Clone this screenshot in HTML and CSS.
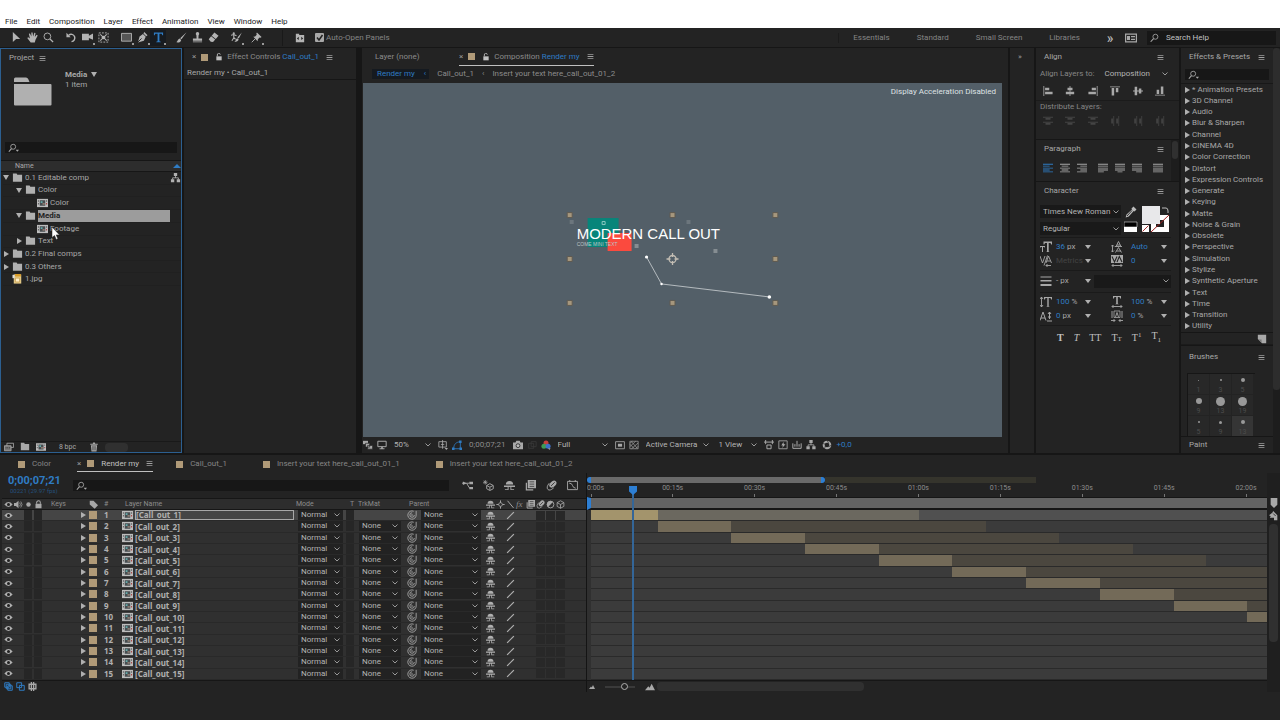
FILE: index.html
```
<!DOCTYPE html>
<html lang="en">
<head>
<meta charset="UTF-8">
<meta name="viewport" content="width=device-width, initial-scale=1.0">
<title>Render my - After Effects</title>
<link rel="stylesheet" href="styles.css">
</head>
<body>
  <svg class="sprite" aria-hidden="true">
    <symbol id="i-menu" viewBox="0 0 12 12"><path d="M1 2h10v1.4H1zM1 5.3h10v1.4H1zM1 8.6h10V10H1z"/></symbol>
    <symbol id="i-select" viewBox="0 0 12 12"><path d="M2 0l8 7.5H5.6L2 11z"/></symbol>
    <symbol id="i-hand" viewBox="0 0 12 12"><path d="M4 11.500L.3 6.600l1-.9L3.200 7 2 2l1.200-.4L4.800 5 4.700.5h1.400L6.700 5 8 .9l1.300.3L8.500 5.500 10.500 3l1.200.7L9.300 8.500 8.500 11.500z"/></symbol>
    <symbol id="i-zoom" viewBox="0 0 12 12"><circle cx="4.800" cy="4.800" r="3.700" fill="none" stroke="currentColor"/><path d="M7.500 7.500l3.500 3.500" stroke="currentColor" stroke-width="1.500"/></symbol>
    <symbol id="i-rotate" viewBox="0 0 12 12"><path d="M3 3.500a4 4 0 1 1 3 7" fill="none" stroke="currentColor" stroke-width="1.600"/><path d="M.5.8v5h4.600z"/></symbol>
    <symbol id="i-camera" viewBox="0 0 12 12"><path d="M0 2h7.500v2L12 1.500v7L7.500 6.500V9H0z"/></symbol>
    <symbol id="i-pan" viewBox="0 0 12 12"><path d="M1 1h10v10H1z" fill="none" stroke="currentColor" stroke-dasharray="2 1.300"/><path d="M2.500 2.500l7 7m0-7l-7 7" stroke="currentColor" stroke-width="1.200"/><circle cx="6" cy="6" r="2"/></symbol>
    <symbol id="i-rect" viewBox="0 0 12 12"><path d="M.5 1.500h11v8.500H.5z" fill="#555" stroke="currentColor"/></symbol>
    <symbol id="i-pen" viewBox="0 0 12 12"><path d="M8 0l3.500 3.500-1.500 1L7 1.500zM6.500 2.200l3 3L7.500 9.500 1 11.500 2.800 5z"/><path d="M1 11l4-4" stroke="#232323"/></symbol>
    <symbol id="i-type" viewBox="0 0 12 12"><path d="M1 .5h10v3h-.9l-.6-1.600H7V10l1.500.5v.7h-5v-.7L5 10V1.900H2.500L1.900 3.500H1z"/></symbol>
    <symbol id="i-brush" viewBox="0 0 12 12"><path d="M11.500.4L6 8 4.500 6.700zM4 7.200l1.600 1.400C5.500 10.800 3 11.800.4 11.300 2 10.300 1.800 7.800 4 7.200z"/></symbol>
    <symbol id="i-stamp" viewBox="0 0 12 12"><path d="M6 0a2 2 0 0 1 1.200 3.500L7 7h4v2.500H1V7h4l-.2-3.500A2 2 0 0 1 6 0zM1 10.300h10v1H1z"/></symbol>
    <symbol id="i-eraser" viewBox="0 0 12 12"><path d="M7 .5L11.500 4 8.500 7.500 4 4zM3.400 4.700l4.500 3.500L5.500 11 3 10.500.8 8z"/></symbol>
    <symbol id="i-roto" viewBox="0 0 12 12"><path d="M11.800.5L8.500 7 7 6zM6.800 6.800l1.500 1.200c-.3 2-2 3-4.800 3C5.500 10 5 7.500 6.800 6.800z"/><circle cx="3" cy="1.500" r="1.200"/><path d="M0 3.500l3-.8 3 1.300M3 3v3.500l-2 3M3 6l2 2" fill="none" stroke="currentColor" stroke-width="1.200"/></symbol>
    <symbol id="i-pin" viewBox="0 0 12 12"><path d="M6.500.5l5 5-1 .8-1.200-.3L7.500 8l-.3 2-4.700-4.700 2-.3L6.300 3 5.800 1.500z"/><path d="M4.500 7.500L.8 11.200" stroke="currentColor"/></symbol>
    <symbol id="i-panels" viewBox="0 0 12 12"><path d="M1 1h4v1.500h6V11H1z"/><path d="M4.500 4.500v4L2.200 6.500zM7.500 4.500v4l2.300-2z" fill="#232323"/></symbol>
    <symbol id="i-sync" viewBox="0 0 12 9"><path d="M.6.6h10.800v7.800H.6z" fill="none" stroke="currentColor" stroke-width="1.200"/><path d="M2 2.500h3v4H2zM6 2.500h4v1.300H6zM6 5.200h4v1.300H6z"/></symbol>
    <symbol id="i-search" viewBox="0 0 12 12"><circle cx="6.500" cy="4.500" r="3" fill="none" stroke="currentColor"/><path d="M4.300 6.700L.8 10.500" stroke="currentColor" stroke-width="1.300"/></symbol>
    <symbol id="i-searchmenu" viewBox="0 0 14 12"><circle cx="6" cy="4.500" r="3" fill="none" stroke="currentColor"/><path d="M4 6.700L.8 10.500" stroke="currentColor" stroke-width="1.300"/><path d="M9 8h4l-2 2.500z"/></symbol>
    <symbol id="i-lock" viewBox="0 0 12 12"><path d="M2 5h8v6H2z"/><path d="M3.500 5V3a2.200 2.200 0 0 1 4.400-.5" fill="none" stroke="currentColor" stroke-width="1.300"/></symbol>
    <symbol id="i-locked" viewBox="0 0 12 12"><path d="M2 5h8v6H2z"/><path d="M3.500 5V3.500a2.500 2.500 0 0 1 5 0V5" fill="none" stroke="currentColor" stroke-width="1.400"/></symbol>
    <symbol id="i-folder" viewBox="0 0 12 10"><path d="M1 0h4l.8 1.500H11V9H1z"/></symbol>
    <symbol id="i-bigfolder" viewBox="0 0 38 29"><path d="M0 4V2q0-1.500 1.500-1.500H12q1.500 0 2.200 1.500L15.500 5H0zM0 7h36.500q1 0 1 1v19.500q0 1-1 1H1q-1 0-1-1z"/></symbol>
    <symbol id="i-comp" viewBox="0 0 12 10"><path d="M0 .500h12v9H0z" fill="#bdbdbd"/><path d="M3 2h6v6H3z" fill="#474d50"/><path d="M1 2h1v1.500H1zM1 5h1v1.500H1zM10 2h1v1.500h-1z" fill="#555"/><path d="M10 5h1v1.500h-1z" fill="#a33"/><path d="M4 3h2v2H4z" fill="#6aa"/><path d="M6 5h2.500v2H6z" fill="#8a7a70"/></symbol>
    <symbol id="i-image" viewBox="0 0 12 12"><path d="M1.500.5h9v11h-9z" fill="#e3c987"/><path d="M3 0h7v3H3z" fill="#d89b28"/><path d="M0 1h2.500v4H0z" fill="#ddd"/><path d="M3.500 5h5v4.500h-5z" fill="#fff0c8" stroke="#b07a20" stroke-width=".6"/></symbol>
    <symbol id="i-flow" viewBox="0 0 12 12"><path d="M4 0h4v3.600H4zM.5 7.500h4v3.500h-4zM7.500 7.500h4v3.500h-4z"/><path d="M6 3v3M2.500 8V5.800h7V8" fill="none" stroke="currentColor"/></symbol>
    <symbol id="i-footage" viewBox="0 0 12 10"><path d="M3.500.5h8v5h-8z" fill="none" stroke="currentColor"/><path d="M.5 3.500h8v6h-8z" fill="#777" stroke="currentColor"/><path d="M2 6h5" stroke="#222" stroke-dasharray="1 1"/></symbol>
    <symbol id="i-trash" viewBox="0 0 12 12"><path d="M1.500 2h3l.5-1.500h2L7.500 2h3v1.200h-9zM2.300 4h7.400L9 11.500H3z"/><path d="M4.500 5v5M6 5v5M7.500 5v5" stroke="#232323" stroke-width=".6"/></symbol>
    <symbol id="i-layers" viewBox="0 0 12 12"><path d="M0 1h6v4H0z"/><path d="M3 4h5v4.500H3zM5.500 6.500h6v4.500h-6z" stroke="#232323" stroke-width=".8"/></symbol>
    <symbol id="i-monitor" viewBox="0 0 12 12"><path d="M1 1.500h10v6.500H1z" fill="none" stroke="currentColor" stroke-width="1.200"/><path d="M5 8h2v2h2v1H3v-1h2z"/></symbol>
    <symbol id="i-guides" viewBox="0 0 12 12"><path d="M1 2h9v6.500H1zM5.500 0v10.500M3.500 5.300h4" fill="none" stroke="currentColor"/><path d="M8 9.500h4L10 12z"/></symbol>
    <symbol id="i-mask" viewBox="0 0 12 12"><path d="M2 10.500C2 5 5 2.500 10 2v8.500z" fill="none" stroke="currentColor"/><path d="M0 9h3v3H0zM8.500.5h3v3h-3zM9 9h3v3H9z"/></symbol>
    <symbol id="i-snapshot" viewBox="0 0 12 12"><path d="M0 3h3l1-2h4l1 2h3v8H0z"/><circle cx="6" cy="6.800" r="2.300" fill="#bbb" stroke="#232323"/></symbol>
    <symbol id="i-show" viewBox="0 0 12 12"><path d="M2 4h6v6H2zM5 2h6v6H5z" fill="none" stroke="currentColor"/></symbol>
    <symbol id="i-rgb" viewBox="0 0 12 12"><circle cx="6" cy="3.500" r="3" fill="#c8403c"/><circle cx="3.500" cy="7.500" r="3" fill="#3f9a55"/><circle cx="8.500" cy="7.500" r="3" fill="#3f6fc8"/><path d="M8.500 10h3L10 12z"/></symbol>
    <symbol id="i-roi" viewBox="0 0 12 12"><path d="M.7 2h10.600v8.500H.7z" fill="none" stroke="currentColor"/><path d="M3.500 4.500h5V8h-5z"/></symbol>
    <symbol id="i-grid" viewBox="0 0 12 12"><path d="M1 1.500h10v9H1zM1 4l3-2.500M1 8l7-6.500M3 10.500l8-7M8 10.500l3-3M3 2l7 8M1 5l5 5" fill="none" stroke="currentColor" stroke-width=".8"/></symbol>
    <symbol id="i-pixel" viewBox="0 0 12 12"><path d="M0 2.500h12M2 0v5M10 0v5M3.500 6h5v4.500h-5z" fill="none" stroke="currentColor" stroke-width="1.200"/></symbol>
    <symbol id="i-fast" viewBox="0 0 12 12"><path d="M1 1h10v9.500H1z" fill="none" stroke="currentColor"/><path d="M6.500 2.500L4 6.500h2L5 9.500l4-4.500H7z"/></symbol>
    <symbol id="i-tl" viewBox="0 0 12 12"><path d="M1 4v6h10V4M6 1v7M3.500 5v3M8.500 5v3" fill="none" stroke="currentColor" stroke-width="1.200"/></symbol>
    <symbol id="i-exposure" viewBox="0 0 12 12"><circle cx="6" cy="6" r="4" fill="none" stroke="currentColor" stroke-width="2.400"/><path d="M6 0l2 4M12 6L8 8M3 11l1-4M0 4l4 1" stroke="#232323" stroke-width=".8"/></symbol>
    <symbol id="i-al" viewBox="0 0 12 12"><path d="M.5 0h1v12h-1zM2.500 2h5v3h-5zM2.500 7h9v3h-9z"/></symbol>
    <symbol id="i-ac" viewBox="0 0 12 12"><path d="M5.500 0h1v12h-1zM3 2h6v3H3zM1 7h10v3H1z"/></symbol>
    <symbol id="i-dist" viewBox="0 0 12 12"><path d="M0 1h12v1H0zM3 2.500h6v2H3zM0 7h12v1H0zM3 8.500h6v2H3z"/></symbol>
    <symbol id="i-para" viewBox="0 0 12 12"><path d="M0 1h12v1H0zM0 3.300h8v1H0zM0 5.600h12v1H0zM0 7.900h8v1H0zM0 10.200h12v1H0z"/></symbol>
    <symbol id="i-parac" viewBox="0 0 12 12"><path d="M0 1h12v1H0zM2 3.300h8v1H2zM0 5.600h12v1H0zM2 7.900h8v1H2zM0 10.200h12v1H0z"/></symbol>
    <symbol id="i-paraj" viewBox="0 0 12 12"><path d="M0 1h12v1H0zM0 3.300h12v1H0zM0 5.600h12v1H0zM0 7.900h12v1H0zM0 10.200h12v1H0z"/></symbol>
    <symbol id="i-paral" viewBox="0 0 12 12"><path d="M0 1h12v1H0zM0 3.300h12v1H0zM0 5.600h12v1H0zM0 7.900h12v1H0zM0 10.200h7v1H0z"/></symbol>
    <symbol id="i-paralc" viewBox="0 0 12 12"><path d="M0 1h12v1H0zM0 3.300h12v1H0zM0 5.600h12v1H0zM0 7.900h12v1H0zM3 10.200h6v1H3z"/></symbol>
    <symbol id="i-dropper" viewBox="0 0 12 12"><path d="M8.500.5l3 3-2 2-.8-.5-5 5.500-3 1 .8-3L7 3.500l-.5-1z"/><path d="M2 10l5-5.500" stroke="#232323" stroke-width=".9"/></symbol>
    <symbol id="i-stroke" viewBox="0 0 12 12"><path d="M.5 1.500h11v1H.5zM.5 5h11v1.500H.5zM.5 9h11v2H.5z"/></symbol>
    <symbol id="i-size" viewBox="0 0 12 12"><path d="M3.500.5H12v3h-.8L10.500 2H8.700v8.500l1 .5H6l1-.5V2H5l-.7 1.500h-.8z"/><path d="M0 5h5v1.500h-.5L4 6H3v5H2V6H1l-.5.5H0z"/></symbol>
    <symbol id="i-vscale" viewBox="0 0 12 12"><path d="M1.500 1v10M0 3l1.500-2L3 3M0 9l1.500 2L3 9" fill="none" stroke="currentColor" stroke-width=".9"/><path d="M4 1h8v2.500h-.8L10.500 2H8.700v8l1 .8H6.300l1-.8V2H5.500l-.7 1.500H4z"/></symbol>
    <symbol id="i-hscale" viewBox="0 0 12 12"><path d="M2 0h8v2.500h-.8L8.500 1H6.800v6.500l1 .7H4.200l1-.7V1H3.500l-.7 1.500H2z"/><path d="M1 10.500h10M2.500 9L1 10.500 2.500 12M9.500 9l1.500 1.500L9.500 12" fill="none" stroke="currentColor" stroke-width=".9"/></symbol>
    <symbol id="i-lead" viewBox="0 0 12 12"><path d="M1.500 4v7M0 9.500L1.500 11 3 9.500M0 5.500L1.500 4 3 5.500M5 5.500L7.500.5l2.500 5M6 4h3M4.500 11.500L7.500 6.500l3 5M5.500 10h4.500M4 5.500h7" fill="none" stroke="currentColor" stroke-width=".9"/></symbol>
    <symbol id="i-kern" viewBox="0 0 12 12"><path d="M0 1l2.500 7L5 1M4 10.500L7.500.5M6 8l2.500-7L11.500 8M7 6h3.500M6 10.500h5M7.500 9L6 10.500 7.500 12" fill="none" stroke="currentColor" stroke-width=".9"/></symbol>
    <symbol id="i-track" viewBox="0 0 12 12"><path d="M0 0h12v8H0z"/><path d="M1 1.500L3.500 7 6 1.500M6 7l2.300-5.500L11 7" fill="none" stroke="#232323" stroke-width="1.100"/><path d="M1 10.500h10M2.500 9L1 10.500 2.500 12M9.500 9l1.500 1.500L9.500 12" fill="none" stroke="currentColor" stroke-width=".9"/></symbol>
    <symbol id="i-base" viewBox="0 0 12 12"><path d="M0 10.500L3 2l3 8.500M1 8h4M7 11h5M9.500 2v7M8 4l1.500-2L11 4M8 7h3" fill="none" stroke="currentColor"/></symbol>
    <symbol id="i-tsume" viewBox="0 0 12 12"><path d="M3 1h6v6.500H3z" fill="none" stroke="currentColor" stroke-width=".8"/><path d="M1 1v7M11 1v7M4.500 7L6 2.500 7.500 7M0 10.500h4M12 10.500H8M2.500 9L4 10.500 2.500 12M9.500 9L8 10.500 9.500 12" fill="none" stroke="currentColor" stroke-width=".9"/></symbol>
    <symbol id="i-new" viewBox="0 0 12 12"><path d="M1 1h10v10H6L1 6z"/><path d="M1.500 6.500h4v4z" fill="#777"/></symbol>
    <symbol id="i-eye" viewBox="0 0 12 12"><path d="M.5 6q5.500-6.500 11 0-5.500 6.500-11 0z"/><circle cx="6" cy="6" r="2" fill="#222"/></symbol>
    <symbol id="i-speaker" viewBox="0 0 12 12"><path d="M0 4h2.500L6 1v10L2.500 8H0z"/><path d="M7.500 3.500q2 2.500 0 5M9 2q3.500 4 0 8" fill="none" stroke="currentColor"/></symbol>
    <symbol id="i-dot" viewBox="0 0 12 12"><circle cx="6" cy="6" r="3"/></symbol>
    <symbol id="i-tag" viewBox="0 0 12 12"><path d="M1 1h5l6 6-4.500 4.500L1 6z"/></symbol>
    <symbol id="i-shy" viewBox="0 0 12 12"><path d="M2 5q0-4 4-4t4 4zM0 6h12v1.500H8V10h3v1H7V7.500H5V11H1v-1h3V7.500H0z"/></symbol>
    <symbol id="i-sun" viewBox="0 0 12 12"><path d="M6 .5v11M.5 6h11" stroke="currentColor" stroke-width="1.300"/><circle cx="6" cy="6" r="2.500" fill="#2d2d2d" stroke="currentColor"/></symbol>
    <symbol id="i-back" viewBox="0 0 12 12"><path d="M2 1l8 9.500" stroke="currentColor" stroke-width="1.300"/></symbol>
    <symbol id="i-slash" viewBox="0 0 12 12"><path d="M1.500 10.500l9-9" stroke="currentColor" stroke-width="1.600"/></symbol>
    <symbol id="i-blend" viewBox="0 0 12 12"><path d="M3 0h9v9H3z"/><path d="M5 2h5M5 4.500h5M5 7h5" stroke="#333" stroke-width=".8"/><path d="M1.500 3v7.800H9" fill="none" stroke="currentColor" stroke-width="1.300"/></symbol>
    <symbol id="i-blur" viewBox="0 0 12 12"><ellipse cx="7.500" cy="4.500" rx="4.500" ry="3" transform="rotate(-45 7.500 4.500)"/><path d="M3.500 3.500Q0 8 2 10.200T8.500 8.500" fill="none" stroke="currentColor"/><path d="M5.500 6.500l4-4" stroke="#333"/></symbol>
    <symbol id="i-adjust" viewBox="0 0 12 12"><circle cx="6" cy="6" r="4.500" fill="none" stroke="currentColor" stroke-width="1.200"/><path d="M9.200 2.800a4.500 4.500 0 1 0-6.400 6.400z"/></symbol>
    <symbol id="i-cube" viewBox="0 0 12 12"><path d="M6 1l4.500 2.500v5L6 11 1.500 8.500v-5zM1.500 3.500L6 6l4.500-2.500M6 6v5" fill="none" stroke="currentColor" stroke-width="1.100"/></symbol>
    <symbol id="i-whip" viewBox="0 0 12 12"><path d="M11 1v5a5 5 0 1 1-3-4.500M8.800 6a2.700 2.700 0 1 1-2.700-2.700" fill="none" stroke="currentColor"/><circle cx="6" cy="6" r=".9"/></symbol>
    <symbol id="i-mini" viewBox="0 0 12 12"><path d="M0 3.500h5M5 3.500h3M5 3.500l3 5h1" fill="none" stroke="currentColor"/><path d="M1 1.500L5 3.500l-4 2zM8 2h4v2.500H8zM8 7.500h4V10H8z"/></symbol>
    <symbol id="i-draft" viewBox="0 0 12 12"><path d="M7.500 4l3.700 2v3.500L7.500 11.500 4 9.500V6zM4 6l3.500 1.800L11 6M7.500 8v3" fill="none" stroke="currentColor"/><path d="M2.500 0v5M0 2.500h5M.8.800l3.400 3.400M4.200.800L.8 4.200" stroke="currentColor" stroke-width=".8"/></symbol>
    <symbol id="i-graph" viewBox="0 0 12 12"><path d="M.6 1.500h10.800v9H.6z" fill="none" stroke="currentColor"/><path d="M2.500 3.500q3 0 3.500 2.500t3.500 3M3 0v2M9 0v2" fill="none" stroke="currentColor"/></symbol>
    <symbol id="i-toggle" viewBox="0 0 12 12"><path d="M1 1h6v6H1zM3 3h6v6H3zM5 5h6v6H5z" fill="none" stroke="currentColor" stroke-width="1.300"/></symbol>
    <symbol id="i-modes" viewBox="0 0 12 12"><path d="M1 1h6.500v6.500H1zM4.500 4.500H11V11H4.500z" fill="none" stroke="currentColor" stroke-width="1.300"/></symbol>
    <symbol id="i-brace" viewBox="0 0 12 12"><path d="M4.500 0v12M7.500 0v12M1.500 3h9v6h-9z" fill="none" stroke="currentColor" stroke-width="1.800"/></symbol>
    <symbol id="i-mtn" viewBox="0 0 12 12"><path d="M0 10l4-5 1.500 1.800L8 2l4 8z"/></symbol>
    <symbol id="i-marker" viewBox="0 0 12 12"><path d="M2 0h8v8l-4 4-4-4z"/></symbol>
    <symbol id="i-compbtn" viewBox="0 0 12 12"><path d="M5 0l5 5v6H6V8L1 8zM0 5l4-3v5z"/><path d="M5 3l3 3" stroke="#232323"/></symbol>
  </svg>

  <div class="app">
    <nav class="menubar">
      <a href="#">File</a>
      <a href="#">Edit</a>
      <a href="#">Composition</a>
      <a href="#">Layer</a>
      <a href="#">Effect</a>
      <a href="#">Animation</a>
      <a href="#">View</a>
      <a href="#">Window</a>
      <a href="#">Help</a>
    </nav>

    <div class="toolbar">
      <div class="tools">
        <button aria-label="Selection"><svg class="icon"><use href="#i-select"/></svg></button>
        <button aria-label="Hand"><svg class="icon"><use href="#i-hand"/></svg></button>
        <button aria-label="Zoom"><svg class="icon"><use href="#i-zoom"/></svg></button>
      </div>
      <div class="tools">
        <button aria-label="Rotation"><svg class="icon"><use href="#i-rotate"/></svg></button>
        <button class="more" aria-label="Camera"><svg class="icon"><use href="#i-camera"/></svg></button>
        <button aria-label="Pan Behind"><svg class="icon"><use href="#i-pan"/></svg></button>
      </div>
      <div class="tools">
        <button class="more" aria-label="Rectangle"><svg class="icon"><use href="#i-rect"/></svg></button>
        <button class="more" aria-label="Pen"><svg class="icon"><use href="#i-pen"/></svg></button>
        <button class="more active" aria-label="Type"><svg class="icon"><use href="#i-type"/></svg></button>
      </div>
      <div class="tools">
        <button aria-label="Brush"><svg class="icon"><use href="#i-brush"/></svg></button>
        <button aria-label="Clone Stamp"><svg class="icon"><use href="#i-stamp"/></svg></button>
        <button aria-label="Eraser"><svg class="icon"><use href="#i-eraser"/></svg></button>
      </div>
      <div class="tools last">
        <button class="more" aria-label="Roto Brush"><svg class="icon"><use href="#i-roto"/></svg></button>
        <button class="more" aria-label="Puppet Pin"><svg class="icon"><use href="#i-pin"/></svg></button>
      </div>
      <button class="panels-button" aria-label="Toggle panels"><svg class="icon"><use href="#i-panels"/></svg></button>
      <label class="auto-open"><input type="checkbox" checked>Auto-Open Panels</label>
      <div class="workspaces">
        <a href="#">Essentials</a>
        <a href="#">Standard</a>
        <a href="#">Small Screen</a>
        <a href="#">Libraries</a>
      </div>
      <button class="more-workspaces" aria-label="More workspaces">»</button>
      <button aria-label="Sync settings"><svg class="icon sync"><use href="#i-sync"/></svg></button>
      <label class="search help-search"><svg class="icon"><use href="#i-search"/></svg><input type="text" placeholder="Search Help" aria-label="Search Help"></label>
    </div>

    <div class="workspace">
      <section class="panel project">
        <header class="panel-head"><h2>Project</h2><svg class="menu"><use href="#i-menu"/></svg></header>
        <div class="project-info">
          <svg class="big-folder"><use href="#i-bigfolder"/></svg>
          <div>
            <div><b>Media</b><span class="down"></span></div>
            <div>1 item</div>
          </div>
        </div>
        <label class="search"><svg class="icon wide"><use href="#i-searchmenu"/></svg><input type="text" aria-label="Search project"></label>
        <div class="tree-head"><span>Name</span><i class="sort"></i></div>
        <ul class="tree">
          <li><i class="down"></i><svg class="icon"><use href="#i-folder"/></svg><span>0.1 Editable comp</span><svg class="icon flow"><use href="#i-flow"/></svg></li>
          <li class="d1"><i class="down"></i><svg class="icon"><use href="#i-folder"/></svg><span>Color</span></li>
          <li class="d2"><svg class="icon"><use href="#i-comp"/></svg><span>Color</span></li>
          <li class="d1 selected"><i class="down"></i><svg class="icon"><use href="#i-folder"/></svg><span>Media</span></li>
          <li class="d2"><svg class="icon"><use href="#i-comp"/></svg><span>Footage</span><svg class="cursor" viewBox="0 0 9 13"><path d="M1 0v10.500l2.500-2 1.700 4 1.700-.7-1.700-3.900h3.300z" fill="#fff" stroke="#222" stroke-width=".5"/></svg></li>
          <li class="d1"><i class="right"></i><svg class="icon"><use href="#i-folder"/></svg><span>Text</span></li>
          <li><i class="right"></i><svg class="icon"><use href="#i-folder"/></svg><span>0.2 Final comps</span></li>
          <li><i class="right"></i><svg class="icon"><use href="#i-folder"/></svg><span>0.3 Others</span></li>
          <li class="file"><svg class="icon"><use href="#i-image"/></svg><span>1.jpg</span></li>
        </ul>
        <footer class="project-foot">
          <button aria-label="Interpret footage"><svg class="icon"><use href="#i-footage"/></svg></button>
          <button aria-label="New folder"><svg class="icon"><use href="#i-folder"/></svg></button>
          <button aria-label="New composition"><svg class="icon"><use href="#i-comp"/></svg></button>
          <button class="bpc">8 bpc</button>
          <button aria-label="Delete"><svg class="icon"><use href="#i-trash"/></svg></button>
          <span class="thumb"></span>
        </footer>
      </section>

      <section class="panel effect-controls">
        <header class="panel-head">
          <span class="close">×</span><i class="swatch"></i><svg class="icon lock"><use href="#i-lock"/></svg>
          <h2 class="dim">Effect Controls <em>Call_out_1</em></h2><svg class="menu"><use href="#i-menu"/></svg>
        </header>
        <div class="effect-path">Render my • Call_out_1</div>
      </section>

      <section class="panel composition">
        <header class="panel-head">
          <span class="layer-tab">Layer (none)</span>
          <div class="comp-tab">
            <span class="close">×</span><i class="swatch"></i><svg class="icon lock"><use href="#i-lock"/></svg>
            <h2 class="dim">Composition <em>Render my</em></h2><svg class="menu"><use href="#i-menu"/></svg>
          </div>
        </header>
        <div class="crumbs">
          <a href="#" class="current">Render my<span>‹</span></a>
          <a href="#">Call_out_1</a><span>‹</span>
          <a href="#">Insert your text here_call_out_01_2</a>
        </div>
        <div class="viewer">
          <svg class="stage" viewBox="0 0 640 354">
            <rect x="225" y="135" width="31" height="29" fill="#07857a"/>
            <rect x="245" y="150" width="24" height="18" fill="#fb4a3e"/>
            <g fill="#858d92"><path d="M272 161h4v4h-4zM351 166h4v4h-4z"/><path d="M207 137h4v4h-4zM324 137h4v4h-4z" opacity=".5"/></g>
            <path d="M239.500 138.500h3v3h-3z" fill="none" stroke="#8cc9c2"/>
            <text x="214" y="156" class="callout">MODERN CALL OUT</text>
            <text x="214" y="163" class="callout-sub">COME MINI TEXT</text>
            <path d="M284 174l15 27 108 13" fill="none" stroke="#b5bbbf"/>
            <g fill="#fff"><circle cx="284" cy="174" r="1.600"/><circle cx="299" cy="201" r="1.200"/><circle cx="407" cy="214" r="1.800"/></g>
            <g fill="#a6977d" stroke="#5f5a50">
              <path d="M204.500 129.500h5v5h-5zM307.500 129.500h5v5h-5zM410.500 129.500h5v5h-5zM204.500 173.500h5v5h-5zM410.500 173.500h5v5h-5zM204.500 217.500h5v5h-5zM307.500 217.500h5v5h-5zM410.500 217.500h5v5h-5z"/>
            </g>
            <g fill="none" stroke="#c4beb4" stroke-width="1.300"><circle cx="310" cy="176" r="3.500"/><path d="M310 170v4M310 178v4M304 176h4M312 176h4"/></g>
          </svg>
          <span class="notice">Display Acceleration Disabled</span>
        </div>
        <footer class="viewer-foot">
          <button aria-label="Always preview"><svg class="icon"><use href="#i-layers"/></svg></button>
          <button aria-label="Primary viewer"><svg class="icon"><use href="#i-monitor"/></svg></button>
          <select class="w-zoom" aria-label="Magnification"><option>50%</option></select>
          <button aria-label="Guides"><svg class="icon"><use href="#i-guides"/></svg></button>
          <button class="blue" aria-label="Mask visibility"><svg class="icon"><use href="#i-mask"/></svg></button>
          <button class="time">0;00;07;21</button>
          <button aria-label="Take snapshot"><svg class="icon"><use href="#i-snapshot"/></svg></button>
          <button class="off" aria-label="Show snapshot"><svg class="icon"><use href="#i-show"/></svg></button>
          <button aria-label="Channels"><svg class="icon"><use href="#i-rgb"/></svg></button>
          <select class="w-res" aria-label="Resolution"><option>Full</option></select>
          <button aria-label="Region of interest"><svg class="icon"><use href="#i-roi"/></svg></button>
          <button aria-label="Transparency grid"><svg class="icon"><use href="#i-grid"/></svg></button>
          <select class="w-camera" aria-label="3D view"><option>Active Camera</option></select>
          <select class="w-view" aria-label="View layout"><option>1 View</option></select>
          <button aria-label="Pixel aspect"><svg class="icon"><use href="#i-pixel"/></svg></button>
          <button aria-label="Fast previews"><svg class="icon"><use href="#i-fast"/></svg></button>
          <button aria-label="Timeline"><svg class="icon"><use href="#i-tl"/></svg></button>
          <button aria-label="Flowchart"><svg class="icon"><use href="#i-flow"/></svg></button>
          <button class="exposure"><svg class="icon"><use href="#i-exposure"/></svg><em>+0,0</em></button>
        </footer>
      </section>

      <section class="panel narrow"><span class="close">»</span></section>

      <div class="column">
        <section class="panel align">
          <header class="panel-head"><h2>Align</h2><svg class="menu"><use href="#i-menu"/></svg></header>
          <label class="align-to">Align Layers to:
            <select><option>Composition</option></select>
          </label>
          <div class="align-row">
            <button aria-label="Align left"><svg class="icon"><use href="#i-al"/></svg></button>
            <button aria-label="Align horizontal centre"><svg class="icon"><use href="#i-ac"/></svg></button>
            <button aria-label="Align right"><svg class="icon flip"><use href="#i-al"/></svg></button>
            <button aria-label="Align top"><svg class="icon turn"><use href="#i-al"/></svg></button>
            <button aria-label="Align vertical centre"><svg class="icon turn"><use href="#i-ac"/></svg></button>
            <button aria-label="Align bottom"><svg class="icon turn-back"><use href="#i-al"/></svg></button>
          </div>
          <div class="align-label">Distribute Layers:</div>
          <div class="align-row off">
            <button aria-label="Distribute top"><svg class="icon"><use href="#i-dist"/></svg></button>
            <button aria-label="Distribute middle"><svg class="icon"><use href="#i-dist"/></svg></button>
            <button aria-label="Distribute bottom"><svg class="icon"><use href="#i-dist"/></svg></button>
            <button aria-label="Distribute left"><svg class="icon turn"><use href="#i-dist"/></svg></button>
            <button aria-label="Distribute centre"><svg class="icon turn"><use href="#i-dist"/></svg></button>
            <button aria-label="Distribute right"><svg class="icon turn"><use href="#i-dist"/></svg></button>
          </div>
        </section>
        <section class="panel paragraph">
          <div>
            <header class="panel-head"><h2>Paragraph</h2><svg class="menu"><use href="#i-menu"/></svg></header>
            <div class="para-row">
              <button class="blue" aria-label="Left"><svg class="icon"><use href="#i-para"/></svg></button>
              <button aria-label="Centre"><svg class="icon"><use href="#i-parac"/></svg></button>
              <button aria-label="Right"><svg class="icon flip"><use href="#i-para"/></svg></button>
              <button class="apart" aria-label="Justify last left"><svg class="icon"><use href="#i-paral"/></svg></button>
              <button aria-label="Justify last centre"><svg class="icon"><use href="#i-paralc"/></svg></button>
              <button aria-label="Justify last right"><svg class="icon flip"><use href="#i-paral"/></svg></button>
              <button class="apart" aria-label="Justify all"><svg class="icon"><use href="#i-paraj"/></svg></button>
            </div>
          </div>
          <div class="para-scroll"><span class="thumb"></span></div>
        </section>
        <section class="panel character">
          <header class="panel-head"><h2>Character</h2><svg class="menu"><use href="#i-menu"/></svg></header>
          <div class="font-row">
            <div class="font-selects">
              <select class="boxed" aria-label="Font family"><option>Times New Roman</option></select>
              <select class="boxed" aria-label="Font style"><option>Regular</option></select>
            </div>
            <svg class="colors" viewBox="0 0 46 28">
              <use href="#i-dropper" x="1" y="1" width="12" height="12" fill="#bbb"/>
              <path d="M0 17h13v5H0z" fill="#000" stroke="#ddd" stroke-width=".6"/><path d="M0 22h13v5H0z" fill="#fff"/>
              <path d="M27 10h18v17H27z" fill="#fff"/><path d="M32 15h8v7h-8z" fill="#232323"/><path d="M27 27L45 10" stroke="#a02020"/>
              <path d="M18 1h18v18H18z" fill="#e8e8ea"/>
              <path d="M18 20h7v7h-7z" fill="#fff"/><path d="M18.500 26.500l6-6" stroke="#a33"/>
              <path d="M38 3h4q2 0 2 3v2" fill="none" stroke="#bbb"/>
            </svg>
          </div>
          <div class="char-grid">
            <svg class="icon"><use href="#i-size"/></svg><span><em>36</em> px</span><i class="down"></i>
            <svg class="icon"><use href="#i-lead"/></svg><span><em>Auto</em></span><i class="down"></i>
            <svg class="icon"><use href="#i-kern"/></svg><span class="off">Metrics</span><i class="down"></i>
            <svg class="icon"><use href="#i-track"/></svg><span><em>0</em></span><i class="down"></i>
          </div>
          <div class="char-grid stroke-row">
            <svg class="icon"><use href="#i-stroke"/></svg><span>- px</span><i class="down"></i>
            <select class="boxed" aria-label="Stroke order"><option></option></select>
          </div>
          <div class="char-grid">
            <svg class="icon"><use href="#i-vscale"/></svg><span><em>100</em> %</span><i class="down"></i>
            <svg class="icon"><use href="#i-hscale"/></svg><span><em>100</em> %</span><i class="down"></i>
            <svg class="icon"><use href="#i-base"/></svg><span><em>0</em> px</span><i class="down"></i>
            <svg class="icon"><use href="#i-tsume"/></svg><span><em>0</em> %</span><i class="down"></i>
          </div>
          <div class="faux">
            <button><b>T</b></button>
            <button><i>T</i></button>
            <button>TT</button>
            <button>T<small>T</small></button>
            <button>T<sup>1</sup></button>
            <button>T<sub>1</sub></button>
          </div>
        </section>
      </div>

      <div class="column effects-column">
        <section class="panel effects">
          <header class="panel-head"><h2>Effects &amp; Presets</h2><svg class="menu"><use href="#i-menu"/></svg></header>
          <label class="search"><svg class="icon wide"><use href="#i-searchmenu"/></svg><input type="text" aria-label="Search effects"></label>
          <ul class="effects-list">
            <li>* Animation Presets</li>
            <li>3D Channel</li>
            <li>Audio</li>
            <li>Blur &amp; Sharpen</li>
            <li>Channel</li>
            <li>CINEMA 4D</li>
            <li>Color Correction</li>
            <li>Distort</li>
            <li>Expression Controls</li>
            <li>Generate</li>
            <li>Keying</li>
            <li>Matte</li>
            <li>Noise &amp; Grain</li>
            <li>Obsolete</li>
            <li>Perspective</li>
            <li>Simulation</li>
            <li>Stylize</li>
            <li>Synthetic Aperture</li>
            <li>Text</li>
            <li>Time</li>
            <li>Transition</li>
            <li>Utility</li>
          </ul>
          <footer class="effects-foot"><svg class="icon"><use href="#i-new"/></svg></footer>
        </section>
        <section class="panel brushes">
          <header class="panel-head"><h2>Brushes</h2><svg class="menu"><use href="#i-menu"/></svg></header>
          <div class="brush-grid">
            <button><i class="b1"></i>1</button>
            <button><i class="b2"></i>3</button>
            <button><i class="b4"></i>5</button>
            <button><i class="b6"></i>9</button>
            <button><i class="b9"></i>13</button>
            <button><i class="b9"></i>19</button>
            <button><i class="b2"></i>5</button>
            <button><i class="b3"></i>9</button>
            <button class="picked"><i class="b4"></i>13</button>
          </div>
        </section>
        <section class="panel paint">
          <header class="panel-head"><h2>Paint</h2><svg class="menu"><use href="#i-menu"/></svg></header>
        </section>
      </div>
      <div class="side-scroll"><span></span></div>
    </div>

    <section class="timeline">
      <div class="tl-tabs">
        <a href="#"><i class="swatch"></i>Color</a>
        <a href="#" class="active"><span class="close">×</span><i class="swatch"></i>Render my<svg class="menu"><use href="#i-menu"/></svg></a>
        <a href="#"><i class="swatch"></i>Call_out_1</a>
        <a href="#"><i class="swatch"></i>Insert your text here_call_out_01_1</a>
        <a href="#"><i class="swatch"></i>Insert your text here_call_out_01_2</a>
      </div>
      <div class="tl-body">
        <div class="tl-left">
          <div class="tl-controls">
            <div class="timecode"><b>0;00;07;21</b><small>00221 (29.97 fps)</small></div>
            <label class="search"><svg class="icon wide"><use href="#i-searchmenu"/></svg><input type="text" aria-label="Search layers"></label>
            <div class="tl-buttons">
              <button aria-label="Mini flowchart"><svg class="icon"><use href="#i-mini"/></svg></button>
              <button aria-label="Draft 3D"><svg class="icon"><use href="#i-draft"/></svg></button>
              <button aria-label="Hide shy layers"><svg class="icon"><use href="#i-shy"/></svg></button>
              <button aria-label="Frame blending"><svg class="icon"><use href="#i-blend"/></svg></button>
              <button aria-label="Motion blur"><svg class="icon"><use href="#i-blur"/></svg></button>
              <button aria-label="Graph editor"><svg class="icon"><use href="#i-graph"/></svg></button>
            </div>
          </div>
          <table class="layers">
            <thead>
              <tr>
                <th class="eye"><svg class="icon"><use href="#i-eye"/></svg></th>
                <th><svg class="icon"><use href="#i-speaker"/></svg></th>
                <th><svg class="icon"><use href="#i-dot"/></svg></th>
                <th><svg class="icon"><use href="#i-locked"/></svg></th>
                <th class="keys">Keys</th>
                <th></th>
                <th><svg class="icon"><use href="#i-tag"/></svg></th>
                <th class="num">#</th>
                <th class="name-head">Layer Name</th>
                <th>Mode</th>
                <th class="center">T</th>
                <th>TrkMat</th>
                <th class="parent-head">Parent</th>
                <th class="switches">
                  <svg class="icon"><use href="#i-shy"/></svg><svg class="icon"><use href="#i-sun"/></svg><svg class="icon"><use href="#i-back"/></svg><i>fx</i><svg class="icon"><use href="#i-blend"/></svg><svg class="icon"><use href="#i-blur"/></svg><svg class="icon"><use href="#i-adjust"/></svg><svg class="icon"><use href="#i-cube"/></svg>
                </th>
              </tr>
            </thead>
            <tbody id="layerRows"></tbody>
          </table>
          <footer class="tl-foot">
            <button class="blue" aria-label="Layer switches"><svg class="icon"><use href="#i-toggle"/></svg></button>
            <button class="blue" aria-label="Transfer controls"><svg class="icon"><use href="#i-modes"/></svg></button>
            <button aria-label="In and out"><svg class="icon"><use href="#i-brace"/></svg></button>
          </footer>
        </div>
        <div class="tl-right">
          <div class="navigator"><i class="view"></i><i class="rest"></i></div>
          <div class="ruler" id="ruler"></div>
          <div class="work-area"></div>
          <div class="lanes" id="lanes"></div>
          <div class="playhead" id="playhead"></div>
          <footer class="tl-foot">
            <svg class="icon small"><use href="#i-mtn"/></svg>
            <input type="range" min="0" max="100" value="70" aria-label="Time zoom">
            <svg class="icon"><use href="#i-mtn"/></svg>
            <span class="thumb"></span>
          </footer>
        </div>
        <div class="tl-side">
          <svg class="icon"><use href="#i-marker"/></svg>
          <svg class="icon"><use href="#i-compbtn"/></svg>
          <span class="thumb"></span>
        </div>
      </div>
    </section>
  </div>

  <script src="script.js"></script>
</body>
</html>
```
FILE: styles.css
```
* {
  box-sizing: border-box;
}
body {
  margin: 0;
  background-color: #161616;
  color: #a8a8a8;
  font-family: Roboto, "Noto Sans", sans-serif;
  font-size: 8px;
  line-height: 10px;
  overflow: hidden;
}
button, input, select {
  font: inherit;
  color: inherit;
  background: none;
  border: none;
  padding: 0;
  margin: 0;
}
button {
  display: flex;
  align-items: center;
  justify-content: center;
  flex: none;
}
a {
  color: inherit;
  text-decoration: none;
}
ul {
  list-style: none;
  margin: 0;
  padding: 0;
}
h2 {
  font-size: 8px;
  font-weight: normal;
  margin: 0;
  white-space: nowrap;
}
em {
  color: #2f7cc4;
  font-style: normal;
}
.sprite {
  display: none;
}
.icon {
  width: 10px;
  height: 10px;
  fill: currentColor;
  flex: none;
}
.icon.wide, .icon.sync {
  width: 12px;
}
.flip {
  transform: scaleX(-1);
}
.turn {
  transform: rotate(90deg);
}
.turn-back {
  transform: rotate(-90deg);
}
.menu {
  width: 7px;
  height: 7px;
  fill: #a0a0a0;
  flex: none;
}
.blue {
  color: #2f7cc4;
}
.off {
  color: #444;
}
.dim {
  color: #8c8c8c;
}
.swatch {
  width: 7px;
  height: 7px;
  background-color: #b09a78;
  flex: none;
}
.down, .right {
  border: 3px solid transparent;
  border-top: 5px solid #b0b0b0;
  border-bottom: none;
  flex: none;
}
.right {
  border: 3px solid transparent;
  border-left: 5px solid #b0b0b0;
  border-right: none;
}
select {
  appearance: none;
  background-image: url("data:image/svg+xml,%3Csvg xmlns='http://www.w3.org/2000/svg' width='6' height='4'%3E%3Cpath d='M.5.5L3 3 5.500.5' fill='none' stroke='%23999'/%3E%3C/svg%3E");
  background-repeat: no-repeat;
  background-position: right 3px center;
  color: #b4b4b4;
  padding: 0 10px 0 3px;
  line-height: 10px;
}
.search {
  display: flex;
  align-items: center;
  height: 11px;
  background-color: #171717;
  padding: 0 3px;
}
.search input {
  flex: 1;
  min-width: 0;
  height: 10px;
  outline: none;
}
.search input::placeholder {
  color: #c0c0c0;
}

/* top bars */
.app {
  display: flex;
  flex-direction: column;
  height: 100vh;
}
.menubar {
  display: flex;
  gap: 9px;
  padding: 17px 5px 1px;
  background-color: #fff;
  color: #222;
}
.toolbar {
  display: flex;
  align-items: center;
  height: 19px;
  margin-bottom: 1px;
  padding: 0 4px 0 8px;
  background-color: #232323;
}
.tools {
  display: flex;
  padding-right: 6px;
  margin-right: 1px;
}
.tools.last {
  gap: 4px;
  padding-right: 18px;
  border-right: 1px solid #191919;
}
.tools button, .panels-button {
  position: relative;
  width: 16px;
  height: 16px;
  color: #b4b4b4;
}
.tools .icon {
  width: 11px;
  height: 11px;
}
.tools .active {
  color: #2f7cc4;
  background-color: #171b20;
}
.tools .more::after {
  content: "";
  position: absolute;
  right: 0;
  bottom: 1px;
  border: 1px solid #999;
}
.panels-button {
  margin-left: 8px;
}
.auto-open {
  display: flex;
  align-items: center;
  gap: 2px;
  margin-left: 7px;
  color: #858585;
}
.auto-open input {
  appearance: none;
  width: 9px;
  height: 9px;
  border-radius: 1px;
  background: #a8a8a8 url("data:image/svg+xml,%3Csvg xmlns='http://www.w3.org/2000/svg' width='9' height='9'%3E%3Cpath d='M2 4.500L4 7 7.500 2' fill='none' stroke='%23222' stroke-width='1.500'/%3E%3C/svg%3E");
}
.workspaces {
  display: flex;
  gap: 27px;
  margin-left: auto;
  padding-left: 14px;
  border-left: 1px solid #1b1b1b;
  color: #858585;
}
.more-workspaces {
  font-size: 14px;
  width: 22px;
  margin: 0 4px 0 19px;
  color: #c0c0c0;
}
.help-search {
  width: 129px;
  height: 14px;
  margin-left: 10px;
  gap: 6px;
}

/* panels */
.workspace {
  flex: 1;
  display: flex;
  min-height: 0;
  margin-bottom: 2px;
}
.panel {
  background-color: #232323;
  min-width: 0;
}
.panel-head {
  display: flex;
  align-items: center;
  height: 18px;
  padding: 0 8px;
}
.close {
  font-size: 8px;
  color: #999;
}
.lock {
  width: 8px;
  height: 8px;
  color: #c0c0c0;
}

.project {
  display: flex;
  flex-direction: column;
  width: 182px;
  margin-right: 2px;
  border: 1px solid #2c5f90;
  flex: none;
}
.project .menu {
  margin-left: 5px;
}
.project-info {
  display: flex;
  gap: 13px;
  height: 75px;
  padding: 3px 13px;
}
.project-info b + .down {
  display: inline-block;
  margin-left: 4px;
}
.big-folder {
  width: 38px;
  height: 29px;
  margin-top: 7px;
  fill: #b0b0b0;
}
.project .search {
  margin: 0 4px 7px;
}
.tree-head {
  display: flex;
  align-items: center;
  justify-content: space-between;
  height: 12px;
  padding: 0 0 0 14px;
  background-color: #2d2d2d;
  border-top: 1px solid #161616;
  border-bottom: 1px solid #161616;
  font-size: 7px;
  flex: none;
}
.sort {
  border: 4px solid transparent;
  border-top: none;
  border-bottom: 4px solid #2f7cc4;
}
.tree {
  display: grid;
  grid-template-rows: repeat(9, 1fr);
  height: 114px;
  padding-left: 2px;
}
.tree li {
  position: relative;
  display: flex;
  align-items: center;
  gap: 2px;
  border-bottom: 1px solid #202020;
}
.tree .icon {
  width: 11px;
  color: #b0b0b0;
}
.tree .down, .tree .right {
  margin-right: 1px;
}
.tree .right {
  margin-left: 1px;
}
.tree .d1 {
  padding-left: 13px;
}
.tree .d2 {
  padding-left: 34px;
}
.tree .file {
  padding-left: 9px;
}
.tree .flow {
  margin-left: auto;
}
.tree .selected span {
  flex: 1;
  margin-right: 11px;
  line-height: 12px;
  background-color: #9c9c9c;
  color: #222;
  font-weight: bold;
}
.cursor {
  position: absolute;
  left: 48px;
  top: 4px;
  width: 9px;
  height: 13px;
  z-index: 1;
}
.project-foot {
  display: flex;
  align-items: center;
  gap: 6px;
  height: 11px;
  margin-top: auto;
  padding-left: 3px;
  border-top: 1px solid #191919;
}
.project-foot .bpc {
  width: 31px;
  font-size: 7px;
}
.thumb {
  display: block;
  border-radius: 4px;
  background-color: #303030;
}
.project-foot .thumb {
  width: 23px;
  height: 9px;
}

.effect-controls {
  width: 172px;
  margin-right: 6px;
  flex: none;
}
.effect-controls .swatch, .comp-tab .swatch {
  margin: 0 7px 0 5px;
}
.effect-controls .dim, .comp-tab .dim {
  margin: 0 7px 0 4px;
}
.effect-path {
  padding: 2px 3px 1px;
  border-bottom: 1px solid #161616;
}

.composition {
  display: flex;
  flex-direction: column;
  flex: 1;
  padding-left: 1px;
}
.composition .panel-head {
  padding-left: 12px;
}
.layer-tab {
  width: 84px;
  color: #8c8c8c;
}
.comp-tab {
  display: flex;
  align-items: center;
  height: 18px;
  border-bottom: 1px solid #c0c0c0;
}
.crumbs {
  display: flex;
  align-items: center;
  gap: 8px;
  height: 17px;
  padding: 0 0 1px 9px;
  color: #8c8c8c;
}
.crumbs .current {
  display: flex;
  gap: 9px;
  padding: 0 3px 0 5px;
  background-color: #151a20;
  color: #2f7cc4;
}
.viewer {
  position: relative;
  flex: 1;
  min-height: 0;
  margin-right: 6px;
  background-color: #535f68;
}
.stage {
  display: block;
  width: 100%;
  height: 100%;
}
.callout {
  font-family: "Liberation Sans", Arial, sans-serif;
  font-size: 15px;
  fill: #fff;
}
.callout-sub {
  font-family: "Liberation Sans", Arial, sans-serif;
  font-size: 5px;
  fill: #bcc4c6;
}
.notice {
  position: absolute;
  top: 4px;
  right: 6px;
  color: #dfe2e4;
}
.viewer-foot {
  display: flex;
  align-items: center;
  gap: 4px;
  height: 16px;
  padding-bottom: 1px;
}
.viewer-foot .w-zoom {
  width: 43px;
}
.viewer-foot .w-res {
  width: 56px;
}
.viewer-foot .w-camera {
  width: 69px;
}
.viewer-foot .w-view {
  width: 44px;
}
.viewer-foot .time {
  margin: 0 3px;
  color: #8c8c8c;
}
.viewer-foot .exposure {
  gap: 5px;
  margin-left: 2px;
}
.viewer-foot .off {
  color: #3a3a3a;
}

.narrow {
  width: 24px;
  margin: 0 2px;
  padding: 4px 8px;
  flex: none;
}
.column {
  display: flex;
  flex-direction: column;
  gap: 1px;
  width: 143px;
  margin-right: 2px;
  flex: none;
}
.column .menu {
  margin-left: auto;
}
.column .panel-head {
  padding-right: 15px;
}
.align {
  height: 91px;
}
.align-to {
  display: flex;
  align-items: center;
  gap: 7px;
  height: 16px;
  padding: 0 8px 0 4px;
  color: #858585;
}
.align-to select {
  flex: 1;
}
.align-row {
  display: flex;
  justify-content: space-between;
  margin: 0 14px 0 7px;
  height: 18px;
}
.align-row.off {
  height: 16px;
}
.align-label {
  padding: 1px 4px;
  border-top: 1px solid #1b1b1b;
  color: #858585;
}
.paragraph {
  display: flex;
  justify-content: space-between;
  height: 41px;
}
.paragraph > div:first-child {
  flex: 1;
}
.paragraph .panel-head {
  padding-right: 7px;
}
.para-scroll {
  width: 8px;
  background-color: #1d1d1d;
}
.para-scroll .thumb {
  height: 18px;
  margin: 1px;
}
.para-row {
  display: flex;
  gap: 7px;
  padding-left: 7px;
  height: 20px;
}
.para-row .apart {
  margin-left: 4px;
}
.character {
  flex: 1;
}
.font-row {
  display: flex;
  gap: 3px;
  padding: 5px 9px 2px 4px;
}
.font-selects {
  display: grid;
  gap: 4px;
  flex: 1;
}
.boxed {
  height: 13px;
  min-width: 0;
  padding: 0 8px 0 3px;
  background-color: #191919;
  background-position: right 2px center;
}
.colors {
  width: 46px;
  height: 28px;
}
.char-grid {
  display: grid;
  grid-template-columns: 16px 28px 27px 20px 29px 10px;
  align-items: center;
  grid-auto-rows: 14px;
  margin: 0 8px 0 4px;
  padding: 2px 0;
  border-top: 1px solid #1a1a1a;
}
.char-grid .icon {
  width: 12px;
  height: 12px;
}
.char-grid span {
  white-space: nowrap;
}
.char-grid .down {
  width: 6px;
  margin-left: 1px;
  border-width: 4px 3px 0;
}
.stroke-row {
  grid-template-columns: 16px 28px 10px 1fr;
  padding: 3px 0 4px;
}
.faux {
  display: flex;
  gap: 10px;
  margin: 0 8px 0 4px;
  padding: 5px 0 0 17px;
  border-top: 1px solid #1a1a1a;
  font-family: "Liberation Serif", serif;
  font-size: 10px;
}
.faux button {
  display: block;
  color: #c0c0c0;
}
.faux small, .faux sup, .faux sub {
  font-size: 7px;
  line-height: 1;
}

.effects-column {
  width: 92px;
  margin-right: 0;
}
.effects-column .panel-head {
  padding: 0 8px;
}
.effects .search {
  margin: 3px 4px;
}
.effects-list {
  display: grid;
  grid-template-rows: repeat(22, 1fr);
  height: 249px;
  padding-left: 4px;
  border-top: 1px solid #181818;
  white-space: nowrap;
}
.effects-list li {
  display: flex;
  align-items: center;
  gap: 2px;
}
.effects-list li::before {
  content: "";
  border: 3px solid transparent;
  border-left: 5px solid #b0b0b0;
  border-right: none;
}
.effects-foot {
  display: flex;
  justify-content: flex-end;
  height: 13px;
  padding: 1px 6px;
  border-top: 1px solid #161616;
  border-bottom: 1px solid #1b1b1b;
}
.brushes {
  flex: 1;
  min-height: 0;
  padding-top: 2px;
  overflow: hidden;
}
.brush-grid {
  display: grid;
  grid-template-columns: repeat(3, 21px);
  gap: 1px;
  width: 68px;
  margin: 7px 6px 0;
  border: solid #161616;
  border-width: 1px 0 0 1px;
  color: #4c4c4c;
}
.brush-grid button {
  flex-direction: column;
  height: 20px;
  font-size: 7px;
  line-height: 8px;
  background-color: #282828;
}
.brush-grid .picked {
  background-color: #353535;
}
.brush-grid i {
  margin: auto;
  border-radius: 50%;
  background-color: #999;
}
.b1 { width: 1px; height: 1px; }
.b2 { width: 2px; height: 2px; }
.b3 { width: 3px; height: 3px; }
.b4 { width: 4px; height: 4px; }
.b6 { width: 6px; height: 6px; }
.b9 { width: 9px; height: 9px; }
.paint {
  height: 16px;
}
.paint .panel-head {
  height: 16px;
}
.side-scroll {
  width: 7px;
  background-color: #1d1d1d;
}
.side-scroll span {
  display: block;
  height: 342px;
  border-radius: 3px;
  background-color: #2d2d2d;
}

/* timeline */
.timeline {
  background-color: #232323;
  padding-bottom: 28px;
}
.tl-tabs {
  display: flex;
  gap: 13px;
  height: 18px;
  padding: 1px 0 0 8px;
  color: #858585;
}
.tl-tabs a {
  display: flex;
  align-items: center;
  height: 16px;
  gap: 7px;
  padding: 0 13px 0 10px;
}
.tl-tabs .active {
  padding: 0;
  color: #c0c0c0;
  border-bottom: 1px solid #c0c0c0;
}
.tl-tabs .close {
  margin-right: -1px;
}
.tl-body {
  display: flex;
}
.tl-left {
  flex: 0 0 587px;
  padding-left: 2px;
  border-right: 1px solid #141414;
}
.tl-controls {
  display: flex;
  align-items: center;
  height: 25px;
  padding-left: 6px;
}
.timecode {
  width: 65px;
  padding-bottom: 2px;
  color: #2f7cc4;
}
.timecode b {
  display: block;
  font-size: 11px;
  line-height: 12px;
}
.timecode small {
  display: block;
  font-size: 6px;
  line-height: 8px;
  padding-left: 2px;
  color: #24507c;
}
.tl-controls .search {
  flex: 1;
}
.tl-buttons {
  display: flex;
  gap: 9px;
  width: 137px;
  padding-left: 12px;
}
.tl-buttons button {
  width: 12px;
}
.tl-buttons .icon {
  width: 11px;
  height: 11px;
}
.layers, .layers thead {
  display: block;
}
.layers tr {
  display: grid;
  grid-template-columns: 12px 10px 10px 10px 37px 8px 11px 22px 174px 50px 12px 44px 82px 1fr;
  align-items: center;
}
.layers th, .layers td {
  padding: 0;
  text-align: left;
  display: flex;
  align-items: center;
}
.layers thead tr {
  height: 12px;
  background-color: #2d2d2d;
  border-top: 1px solid #161616;
  border-bottom: 1px solid #161616;
}
.layers th {
  font-size: 7px;
  font-weight: normal;
  color: #8c8c8c;
}
.layers thead .icon {
  width: 9px;
  height: 9px;
  color: #a8a8a8;
}
.layers .num {
  padding-left: 4px;
}
.layers .name-head {
  padding-left: 3px;
}
.layers .parent-head, .layers .keys {
  padding-left: 7px;
}
.layers .center {
  justify-content: center;
}
.layers tbody {
  display: grid;
  grid-template-rows: repeat(15, 1fr);
  height: 170px;
  background-color: #303030;
}
.layers tbody tr {
  border-bottom: 1px solid #292929;
  color: #b0b0b0;
}
.layers tbody .picked {
  background-color: #454545;
}
.layers .hole::after {
  content: "";
  width: 8px;
  height: 10px;
  background-color: #262626;
}
.layers .eye .icon {
  width: 9px;
  height: 9px;
  margin-left: 2px;
}
.layers td .swatch {
  width: 8px;
  height: 8px;
}
.layers td b {
  font-family: "Noto Sans", sans-serif;
  font-size: 8px;
}
.layers .name {
  gap: 2px;
  white-space: nowrap;
}
.layers .name .icon {
  width: 11px;
}
.layers .name b {
  flex: 1;
  margin-right: 2px;
  line-height: 9px;
}
.layers .picked .name b {
  border: 1px solid #a8a8a8;
  line-height: 8px;
}
.layers select {
  width: 45px;
  height: 10px;
  margin-left: 2px;
  background-color: #222;
}
.layers .matte select {
  width: 42px;
  margin-left: 1px;
}
.layers .parent {
  gap: 2px;
  padding-left: 5px;
}
.layers .parent select {
  width: 60px;
}
.layers .switches {
  padding-left: 2px;
  gap: 1px;
}
.layers .switches > * {
  width: 9px;
  height: 9px;
  flex: none;
}
.layers thead .switches i {
  font-family: "Liberation Serif", serif;
  font-size: 9px;
  line-height: 9px;
}
.switches .slot {
  background-color: #282828;
}
.tl-foot {
  display: flex;
  align-items: center;
  height: 12px;
  gap: 2px;
  padding-left: 2px;
  border-top: 1px solid #161616;
}
.tl-left .tl-foot .icon {
  width: 9px;
  height: 9px;
}
.tl-left .tl-foot {
  gap: 3px;
}

.tl-right {
  position: relative;
  flex: 1;
  min-width: 0;
  overflow: hidden;
}
.navigator {
  display: flex;
  height: 6px;
  margin-top: 4px;
}
.navigator .view {
  width: 35%;
  background-color: #6a6a6a;
  border: solid #2d7fd4;
  border-width: 0 4px;
  border-radius: 3px;
}
.navigator .rest {
  width: 31%;
  background-color: #35342c;
}
.ruler {
  display: flex;
  height: 14px;
  color: #8c8c8c;
  font-size: 7px;
  line-height: 11px;
  padding-left: 4px;
}
.ruler span {
  flex: none;
  text-align: center;
}
.ruler span::after {
  content: "";
  display: block;
  width: 1px;
  height: 3px;
  margin: 0 auto;
  background-color: #777;
}
.ruler .first {
  margin-left: -4px;
  text-align: left;
}
.ruler .first::after {
  margin-left: 4px;
}
.work-area {
  height: 13px;
  background-color: #636363;
  border: 1px solid #161616;
  border-width: 1px 0 2px;
  border-left: 4px solid #2d7fd4;
}
.lanes {
  display: grid;
  grid-template-rows: repeat(15, 1fr);
  height: 170px;
  border-left: 4px solid #303030;
}
.lane {
  display: flex;
  overflow: hidden;
  background-color: #3b3b3b;
  border-bottom: 1px solid #2a2a2a;
}
.lane i {
  flex: none;
  background-color: #736a58;
}
.lane i + i {
  background-color: #4b473f;
}
.lane.picked {
  background-color: #505050;
}
.lane.picked i {
  background-color: #a3946c;
}
.lane.picked i + i {
  background-color: #6b685f;
}
.playhead {
  position: absolute;
  top: 13px;
  bottom: 12px;
  width: 2px;
  background-color: #346698;
}
.playhead::before {
  content: "";
  position: absolute;
  left: -3px;
  width: 8px;
  height: 9px;
  background-color: #2d7fd4;
  clip-path: polygon(0 0, 100% 0, 100% 60%, 50% 100%, 0 60%);
}
.tl-right .tl-foot .small {
  width: 6px;
  height: 6px;
}
.tl-foot input {
  appearance: none;
  width: 30px;
  height: 2px;
  margin: 0 8px 0 8px;
  background-color: #3a3a3a;
}
.tl-foot input::-webkit-slider-thumb {
  appearance: none;
  width: 7px;
  height: 7px;
  border: 1px solid #b0b0b0;
  border-radius: 50%;
  background-color: #232323;
}
.tl-foot .thumb {
  width: 207px;
  height: 9px;
}
.tl-side {
  display: flex;
  flex-direction: column;
  align-items: center;
  gap: 3px;
  width: 13px;
  padding-top: 25px;
  background-color: #1f1f1f;
}
.tl-side .thumb {
  width: 9px;
  height: 118px;
}
```
FILE: script.js
```
const visibleSeconds = 123.8;
const currentTime = 7.7;
const layerLength = 60;
const starts = [0, 12.3, 25.7, 39.2, 52.7, 66.2, 79.7, 93.2, 106.8, 120.2];
const layerCount = 15;

function percent(seconds) {
  return (seconds / visibleSeconds * 100) + '%';
}

function icon(name) {
  return `<svg class="icon"><use href="#i-${name}"/></svg>`;
}

const rows = document.getElementById('layerRows');
const lanes = document.getElementById('lanes');

for (let i = 0; i < layerCount; i++) {
  const number = i + 1;
  const row = document.createElement('tr');
  row.className = i === 0 ? 'picked' : '';
  row.innerHTML = `
    <td class="eye">${icon('eye')}</td>
    <td></td>
    <td class="hole"></td>
    <td class="hole"></td>
    <td></td>
    <td><i class="right"></i></td>
    <td><i class="swatch label"></i></td>
    <td class="num"><b>${number}</b></td>
    <td class="name">${icon('comp')}<b>[Call_out_${number}]</b></td>
    <td><select aria-label="Mode ${number}"><option>Normal</option></select></td>
    <td class="hole"></td>
    <td class="matte">${i === 0 ? '' : `<select aria-label="Track matte ${number}"><option>None</option></select>`}</td>
    <td class="parent">${icon('whip')}<select aria-label="Parent ${number}"><option>None</option></select></td>
    <td class="switches">${icon('shy')}<i></i>${icon('slash')}<i></i><i></i><i class="slot"></i><i class="slot"></i><i class="slot"></i></td>
  `;
  rows.appendChild(row);

  const lane = document.createElement('div');
  lane.className = i === 0 ? 'lane picked' : 'lane';
  if (i < starts.length) {
    const used = (i + 1 < starts.length ? starts[i + 1] : starts[i] + 13.5) - starts[i];
    lane.innerHTML = `<i style="margin-left: ${percent(starts[i])}; width: ${percent(used)}"></i><i style="width: ${percent(layerLength - used)}"></i>`;
  }
  lanes.appendChild(lane);
}

const ruler = document.getElementById('ruler');
for (let s = 0; s <= 120; s += 15) {
  const mark = document.createElement('span');
  if (s === 0) {
    mark.className = 'first';
    mark.textContent = '0:00s';
    mark.style.width = percent(8.2);
  } else {
    mark.textContent = `0${Math.floor(s / 60)}:${String(s % 60).padStart(2, '0')}s`;
    mark.style.width = percent(15);
  }
  ruler.appendChild(mark);
}

document.getElementById('playhead').style.left = percent(currentTime + 0.5);
```
